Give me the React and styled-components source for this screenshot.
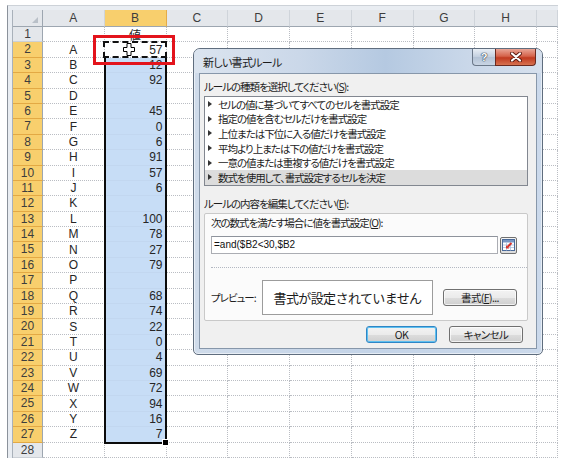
import React from "react";
import styled, { createGlobalStyle, css } from "styled-components";

const GlobalStyle = createGlobalStyle`
  html, body {
    margin: 0;
    padding: 0;
    background: #fff;
  }
  body {
    font-family: "Liberation Sans", "Noto Sans CJK JP", sans-serif;
  }
`;

const COL_W = 61.75;
const ROW_H = 15.4;
const COLS = ["A", "B", "C", "D", "E", "F", "G", "H", ""];

const DATA = [
  ["A", 57], ["B", 12], ["C", 92], ["D", ""], ["E", 45], ["F", 0],
  ["G", 6], ["H", 91], ["I", 57], ["J", 6], ["K", ""], ["L", 100],
  ["M", 78], ["N", 27], ["O", 79], ["P", ""], ["Q", 68], ["R", 74],
  ["S", 22], ["T", 0], ["U", 4], ["V", 69], ["W", 72], ["X", 94],
  ["Y", 16], ["Z", 7],
];

const RULES = [
  "セルの値に基づいてすべてのセルを書式設定",
  "指定の値を含むセルだけを書式設定",
  "上位または下位に入る値だけを書式設定",
  "平均より上または下の値だけを書式設定",
  "一意の値または重複する値だけを書式設定",
  "数式を使用して、書式設定するセルを決定",
];

const Page = styled.div`
  position: relative;
  width: 567px;
  height: 468px;
  overflow: hidden;
  background: #fff;
`;

/* ---------- sheet ---------- */

const Frame = styled.div`
  box-sizing: border-box;
  width: 551px;
  margin: 5px 0 0 7px;
  border-left: 1px solid #8b929b;
  border-top: 1px solid #cdd2d8;
  padding: 4px 0 0 4px;
  background: #e9edf2;
`;

const Sheet = styled.div`
  position: relative;
  display: grid;
  grid-template-columns: 30px repeat(8, ${COL_W}px) 1fr;
  grid-template-rows: 17px repeat(28, ${ROW_H}px);
  border-left: 1px solid #a9b1ba;
  background: #fff;
`;

const headBase = css`
  box-sizing: border-box;
  font-size: 12px;
  color: #3d3d3d;
  text-align: center;
  white-space: nowrap;
  overflow: hidden;
`;

const Corner = styled.div`
  ${headBase};
  position: relative;
  background: #e4e7eb;
  border-right: 1px solid #9da6b0;
  border-bottom: 1px solid #9da6b0;

  &::after {
    content: "";
    position: absolute;
    right: 4px;
    bottom: 3px;
    border-left: 6px solid transparent;
    border-bottom: 6px solid #b9c0c8;
  }
`;

const ColHead = styled.div`
  ${headBase};
  line-height: 16px;
  background: ${(p) => (p.$hl ? "#f8cf6d" : "#e4e7eb")};
  border-right: 1px solid ${(p) => (p.$hl ? "#e4ac48" : "#cfd4da")};
  border-bottom: 1px solid #9da6b0;
`;

const RowHead = styled.div`
  ${headBase};
  line-height: 14px;
  background: ${(p) => (p.$hl ? "#f8cf6d" : "#e4e7eb")};
  border-right: 1px solid #9da6b0;
  border-bottom: 1px solid ${(p) => (p.$hl ? "#e3a944" : "#cbd0d6")};
`;

const Cell = styled.div`
  box-sizing: border-box;
  display: flex;
  align-items: center;
  justify-content: ${(p) => p.$align || "flex-start"};
  padding: 0 3px;
  font-size: 12px;
  color: #262626;
  white-space: nowrap;
  overflow: hidden;
  background: ${(p) => (p.$sel ? "#c7ddf6" : "#fff")};
  border-right: 1px dotted #babdc3;
  border-bottom: 1px ${(p) => (p.$sel ? "solid #c2d7f0" : "dotted #babdc3")};
`;

const Cursor = styled.svg`
  position: relative;
  z-index: 2;
  margin-left: 15px;
  flex: none;
`;

const Selection = styled.div`
  position: absolute;
  grid-column: 3 / 4;
  grid-row: 4 / 29;
  top: 0;
  left: -1px;
  right: 0;
  bottom: -1px;
  border: 2px solid #0b0b0b;
  border-top: none;
  pointer-events: none;
`;

const FillHandle = styled.div`
  position: absolute;
  right: -4px;
  bottom: -4px;
  width: 5px;
  height: 5px;
  background: #000;
  border: 1px solid #fff;
`;

const Marquee = styled.div`
  position: absolute;
  grid-column: 3 / 4;
  grid-row: 3 / 4;
  top: -1px;
  left: -2px;
  right: 0;
  bottom: 0;
  border: 2px dashed #111;
  pointer-events: none;
`;

const Callout = styled.div`
  position: absolute;
  left: 93px;
  top: 35px;
  width: 82px;
  height: 30px;
  box-sizing: border-box;
  border: 3px solid #e3141c;
`;

/* ---------- dialog ---------- */

const Dialog = styled.div`
  position: absolute;
  left: 193px;
  top: 48px;
  width: 350px;
  height: 307px;
  box-sizing: border-box;
  display: flex;
  flex-direction: column;
  border: 1px solid #5f6d7e;
  border-radius: 7px 7px 5px 5px;
  background: linear-gradient(90deg, #cfdbea 0%, #c4d4e8 50%, #cbd9eb 100%);
  box-shadow: inset 0 0 0 1px rgba(255, 255, 255, 0.55);
  font-family: "Noto Sans CJK JP", "Liberation Sans", sans-serif;
  font-feature-settings: "palt";
  font-size: 10.5px;
  letter-spacing: -1px;
  color: #1c1c1c;
`;

const TitleBar = styled.div`
  height: 24px;
  display: flex;
  align-items: flex-start;
  padding-left: 9px;
  border-radius: 6px 6px 0 0;
  background: linear-gradient(
    90deg,
    #dbe4ef 0%,
    #cbd8e9 30%,
    #b5c9e1 55%,
    #c9d7e9 78%,
    #d6e0ed 100%
  );
`;

const Title = styled.div`
  padding-top: 6px;
  line-height: 14px;
  font-size: 11px;
  letter-spacing: -0.7px;
`;

const Caption = styled.div`
  margin-left: auto;
  margin-right: 6px;
  display: flex;
  height: 17px;
`;

const HelpButton = styled.div`
  box-sizing: border-box;
  width: 23px;
  height: 17px;
  border: 1px solid #6b7889;
  border-top: none;
  border-right: none;
  border-radius: 0 0 0 4px;
  background: linear-gradient(#e8eef5, #c2cfdf 50%, #b3c2d5 51%, #c9d5e4);
  color: #fff;
  font: bold 11px/16px "Liberation Sans", sans-serif;
  letter-spacing: 0;
  text-align: center;
  text-shadow: 0 0 1px #2d3a4a, 0 0 1px #2d3a4a, 0 0 1px #2d3a4a;
`;

const CloseButton = styled.div`
  box-sizing: border-box;
  width: 41px;
  height: 17px;
  display: flex;
  align-items: center;
  justify-content: center;
  border: 1px solid #6a2a20;
  border-top: none;
  border-radius: 0 0 4px 0;
  background: linear-gradient(#e9a596 0%, #d5634b 45%, #c03a20 55%, #d77250 100%);
`;

const Client = styled.div`
  flex: 1;
  margin: 0 5px 5px;
  border: 1px solid #8797aa;
  background: #f0f0f0;
  padding: 6px 8px 0 4px;
  display: flex;
  flex-direction: column;
`;

const Label = styled.div`
  line-height: 14px;
  margin-top: ${(p) => p.$gap || 0}px;
  white-space: nowrap;
`;

const ListBox = styled.div`
  margin-top: 2px;
  height: 90px;
  box-sizing: border-box;
  border: 1px solid #828790;
  background: #fff;
  overflow: hidden;
`;

const ListItem = styled.div`
  height: 14.6px;
  display: flex;
  align-items: center;
  padding-left: 3px;
  white-space: nowrap;
  background: ${(p) => (p.$selected ? "#dcdcdc" : "transparent")};
`;

const Arrow = styled.span`
  width: 0;
  height: 0;
  margin-right: 6px;
  border-left: 4px solid #333;
  border-top: 3px solid transparent;
  border-bottom: 3px solid transparent;
`;

const GroupBox = styled.div`
  margin-top: 2px;
  height: 108px;
  box-sizing: border-box;
  border: 1px solid #c9c9c9;
  border-radius: 2px;
  background: #fbfbfb;
  padding: 2px 10px 0 6px;
`;

const FormulaRow = styled.div`
  margin-top: 6px;
  display: flex;
  align-items: center;
  gap: 2px;
`;

const FormulaInput = styled.div`
  width: 287px;
  height: 18px;
  box-sizing: border-box;
  border: 1px solid #abadb3;
  border-top-color: #8e939c;
  background: #fff;
  padding-left: 2px;
  font: 10px/16px "Liberation Sans", sans-serif;
  letter-spacing: 0;
  color: #111;
`;

const RangeButton = styled.div`
  width: 17px;
  height: 17px;
  box-sizing: border-box;
  display: flex;
  align-items: center;
  justify-content: center;
  border: 1px solid #707070;
  border-radius: 2px;
  background: linear-gradient(#f4f4f4, #dcdcdc);
`;

const Separator = styled.div`
  margin: 13px -10px 0 0;
  border-top: 1px dotted #b3b8c2;
`;

const PreviewRow = styled.div`
  margin-top: 12px;
  display: flex;
  align-items: center;
`;

const PreviewLabel = styled.div`
  width: 51px;
  flex: none;
  line-height: 14px;
  white-space: nowrap;
`;

const PreviewBox = styled.div`
  width: 171px;
  height: 35px;
  flex: none;
  box-sizing: border-box;
  display: flex;
  align-items: center;
  justify-content: center;
  border: 1px solid #9c9c9c;
  background: #fff;
  font-size: 13px;
  font-feature-settings: normal;
  letter-spacing: -0.6px;
  white-space: nowrap;
`;

const ButtonRow = styled.div`
  margin-top: 5px;
  display: flex;
  justify-content: flex-end;
  gap: 12px;
  padding-right: 5px;
`;

const Button = styled.button`
  width: ${(p) => p.$w}px;
  height: 17px;
  flex: none;
  margin: 0 0 0 ${(p) => p.$ml || 0}px;
  padding: 0;
  box-sizing: border-box;
  border: 1px solid ${(p) => (p.$default ? "#2f86c6" : "#707070")};
  border-radius: 3px;
  background: linear-gradient(#f3f3f3 0%, #ebebeb 50%, #dddddd 51%, #cfcfcf 100%);
  box-shadow: inset 0 0 0 1px ${(p) => (p.$default ? "#5fc0ef" : "rgba(255,255,255,0.7)")};
  font: inherit;
  font-size: 10.5px;
  line-height: 15px;
  letter-spacing: -0.6px;
  color: #1c1c1c;
`;

const CursorIcon = () => (
  <Cursor width="12" height="13" viewBox="0 0 12 13">
    <path
      d="M4 .5h4v4h3.5v4H8v4H4v-4H.5v-4H4z"
      fill="#fff"
      stroke="#000"
      strokeWidth="1"
    />
  </Cursor>
);

const CloseGlyph = () => (
  <svg width="12" height="10" viewBox="0 0 12 10">
    <path d="M2 1.5l8 7M10 1.5l-8 7" stroke="#5b1a10" strokeWidth="4" strokeLinecap="round" />
    <path d="M2 1.5l8 7M10 1.5l-8 7" stroke="#fff" strokeWidth="2.2" strokeLinecap="round" />
  </svg>
);

const RangeIcon = () => (
  <svg width="13" height="12" viewBox="0 0 13 12">
    <rect x="0.5" y="0.5" width="12" height="11" fill="#fff" stroke="#4a6a9a" />
    <rect x="1" y="1" width="11" height="2.5" fill="#7896c4" />
    <path d="M1 6h11M1 8.5h11M4.5 3.5v8M8.5 3.5v8" stroke="#a9bfdd" strokeWidth="0.8" />
    <path d="M9.5 4L5.5 8" stroke="#d8322a" strokeWidth="2" />
    <path d="M4 6.2v3.3h3.3z" fill="#d8322a" />
  </svg>
);

const SheetView = () => {
  const rows = [];
  for (let n = 1; n <= 28; n++) {
    const hl = n >= 2 && n <= 27;
    const item = hl ? DATA[n - 2] : null;
    rows.push(
      <RowHead key={`r${n}`} $hl={hl}>
        {n}
      </RowHead>
    );
    COLS.forEach((c, i) => {
      const key = `c${n}-${i}`;
      if (i === 0 && item) {
        rows.push(
          <Cell key={key} $align="center">
            {item[0]}
          </Cell>
        );
      } else if (i === 1 && n === 1) {
        rows.push(
          <Cell key={key} $align="center">
            値
          </Cell>
        );
      } else if (i === 1 && n === 2) {
        rows.push(
          <Cell key={key} $align="space-between">
            <CursorIcon />
            {item[1]}
          </Cell>
        );
      } else if (i === 1 && item) {
        rows.push(
          <Cell key={key} $align="flex-end" $sel>
            {item[1]}
          </Cell>
        );
      } else {
        rows.push(<Cell key={key} />);
      }
    });
  }

  return (
    <Frame>
      <Sheet>
        <Corner />
        {COLS.map((c, i) => (
          <ColHead key={`h${i}`} $hl={c === "B"}>
            {c}
          </ColHead>
        ))}
        {rows}
        <Selection>
          <FillHandle />
        </Selection>
        <Marquee />
      </Sheet>
    </Frame>
  );
};

const RuleDialog = () => (
  <Dialog>
    <TitleBar>
      <Title>新しい書式ルール</Title>
      <Caption>
        <HelpButton>?</HelpButton>
        <CloseButton>
          <CloseGlyph />
        </CloseButton>
      </Caption>
    </TitleBar>
    <Client>
      <Label>
        ルールの種類を選択してください(<u>S</u>):
      </Label>
      <ListBox>
        {RULES.map((r, i) => (
          <ListItem key={r} $selected={i === RULES.length - 1}>
            <Arrow />
            {r}
          </ListItem>
        ))}
      </ListBox>
      <Label $gap={11}>
        ルールの内容を編集してください(<u>E</u>):
      </Label>
      <GroupBox>
        <Label>
          次の数式を満たす場合に値を書式設定(<u>O</u>):
        </Label>
        <FormulaRow>
          <FormulaInput>{"=and($B2<30,$B2"}</FormulaInput>
          <RangeButton>
            <RangeIcon />
          </RangeButton>
        </FormulaRow>
        <Separator />
        <PreviewRow>
          <PreviewLabel>プレビュー:</PreviewLabel>
          <PreviewBox>書式が設定されていません</PreviewBox>
          <Button $w={74} $ml={10}>
            書式(<u>F</u>)...
          </Button>
        </PreviewRow>
      </GroupBox>
      <ButtonRow>
        <Button $w={71} $default>
          OK
        </Button>
        <Button $w={74}>キャンセル</Button>
      </ButtonRow>
    </Client>
  </Dialog>
);

export default function App() {
  return (
    <Page>
      <GlobalStyle />
      <SheetView />
      <Callout />
      <RuleDialog />
    </Page>
  );
}
